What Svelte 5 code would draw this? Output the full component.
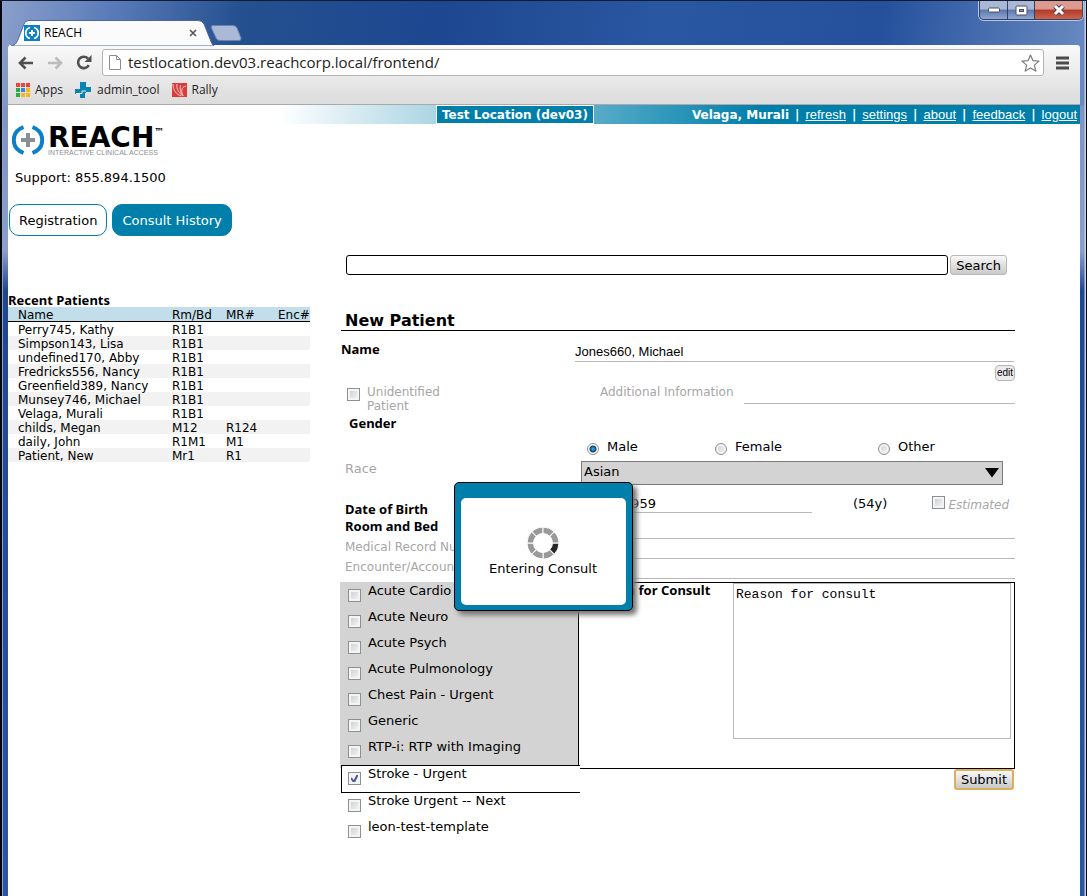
<script>
  const links = ['refresh', 'settings', 'about', 'feedback', 'logout'];
  const patients = [
    ['Perry745, Kathy', 'R1B1', '', ''],
    ['Simpson143, Lisa', 'R1B1', '', ''],
    ['undefined170, Abby', 'R1B1', '', ''],
    ['Fredricks556, Nancy', 'R1B1', '', ''],
    ['Greenfield389, Nancy', 'R1B1', '', ''],
    ['Munsey746, Michael', 'R1B1', '', ''],
    ['Velaga, Murali', 'R1B1', '', ''],
    ['childs, Megan', 'M12', 'R124', ''],
    ['daily, John', 'R1M1', 'M1', ''],
    ['Patient, New', 'Mr1', 'R1', '']
  ];
  let templates = $state([
    { name: 'Acute Cardio', on: false },
    { name: 'Acute Neuro', on: false },
    { name: 'Acute Psych', on: false },
    { name: 'Acute Pulmonology', on: false },
    { name: 'Chest Pain - Urgent', on: false },
    { name: 'Generic', on: false },
    { name: 'RTP-i: RTP with Imaging', on: false },
    { name: 'Stroke - Urgent', on: true },
    { name: 'Stroke Urgent -- Next', on: false },
    { name: 'leon-test-template', on: false }
  ]);
  let gender = $state('Male');
  let name = $state('Jones660, Michael');
  let birth = $state('01/01/1959');
  let reason = $state('Reason for consult');
  const appColors = ['#e8453c', '#e8453c', '#e8453c', '#2da94f', '#3b82e8', '#f4b61a', '#2da94f', '#f4b61a', '#f4b61a'];
</script>

<div class="window">
  <div class="controls">
    <button class="ctl min" aria-label="Minimize">
      <svg width="14" height="6"><rect x="1.5" y="1" width="11" height="4" rx="1" fill="#fff" stroke="#4a4f63" /></svg>
    </button>
    <button class="ctl max" aria-label="Maximize">
      <svg width="13" height="11"><rect x="1" y="1" width="11" height="9" rx="1" fill="#fff" stroke="#4a4f63" /><rect x="4.5" y="4.5" width="4" height="2" fill="#7b93c4" stroke="#4a4f63" /></svg>
    </button>
    <button class="ctl close" aria-label="Close">
      <svg width="14" height="12" viewBox="0 0 14 12"><path d="M3 2l8 8M11 2l-8 8" stroke="#54424c" stroke-width="5" /><path d="M3 2l8 8M11 2l-8 8" stroke="#fff" stroke-width="3" /></svg>
    </button>
  </div>

  <div class="tabstrip">
    <div class="tab">
      <svg class="tabshape" viewBox="0 0 203 26" preserveAspectRatio="none"><path d="M0 26C5 25 6 22 8 17L13 4Q14 .5 18 .5H187Q191 .5 193 4L199 19Q201 25 203 26Z" fill="#fbfbfb" stroke="#4d669c" stroke-width="1" /></svg>
      <svg class="favicon" width="16" height="16" viewBox="0 0 16 16"><rect width="16" height="16" fill="#0b80c5" /><path d="M6 2.500A5.700 5.700 0 0 0 6 13.500M10 2.500A5.700 5.700 0 0 1 10 13.500" fill="none" stroke="#fff" stroke-width="1.800" /><path d="M8 5v6M5 8h6" stroke="#fff" stroke-width="2" /></svg>
      <span class="tabtitle">REACH</span>
      <button class="tabclose" aria-label="Close tab"><svg width="8" height="8" viewBox="0 0 8 8"><path d="M1 1l6 6M7 1L1 7" stroke="#555" stroke-width="1.600" /></svg></button>
    </div>
    <button class="newtab" aria-label="New tab"><svg width="32" height="16" viewBox="0 0 32 16"><path d="M3 .5H23Q26 .5 27 3L31 13Q31.500 15.500 29 15.500H10Q7 15.500 6 13L1.500 3Q.500 .5 3 .5Z" fill="#a9b9d6" stroke="#6c82ae" /></svg></button>
  </div>

  <div class="toolbar">
    <div class="addressrow">
      <button class="nav" aria-label="Back"><svg width="16" height="14" viewBox="0 0 16 14"><path d="M7.500 1.500L2 7l5.500 5.500M2 7h13" fill="none" stroke="#505050" stroke-width="2.600" /></svg></button>
      <button class="nav" aria-label="Forward"><svg width="16" height="14" viewBox="0 0 16 14"><path d="M8.500 1.500L14 7l-5.500 5.500M14 7H1" fill="none" stroke="#bcbcbc" stroke-width="2.600" /></svg></button>
      <button class="nav" aria-label="Reload"><svg width="16" height="15" viewBox="0 0 16 15"><path d="M12.800 10.200A5.700 5.700 0 1 1 12 3.600" fill="none" stroke="#505050" stroke-width="2.600" /><path d="M15.500 0v7H8.500Z" fill="#505050" /></svg></button>
      <div class="omnibox">
        <svg width="12" height="15" viewBox="0 0 12 15"><path d="M.500 .5H7.500L11.500 4.500V14.500H.500ZM7.500 .5V4.500H11.500" fill="#fff" stroke="#8c8c8c" /></svg>
        <input class="url" aria-label="Address" value="testlocation.dev03.reachcorp.local/frontend/" />
        <button class="star" aria-label="Bookmark this page"><svg width="19" height="18" viewBox="0 0 19 18"><path d="M9.500 1l2.400 5.600 6.100.5-4.600 4 1.400 6-5.300-3.200-5.300 3.200 1.400-6-4.600-4 6.100-.5Z" fill="#fff" stroke="#7c7c7c" stroke-width="1.200" stroke-linejoin="round" /></svg></button>
      </div>
      <button class="menu" aria-label="Menu"><svg width="13" height="14"><path d="M0 2h13M0 7h13M0 12h13" stroke="#4b4b4b" stroke-width="3" /></svg></button>
    </div>
    <div class="bookmarks">
      <a href="#apps"><svg width="14" height="14">{#each appColors as c, i}<rect x={(i % 3) * 5} y={Math.floor(i / 3) * 5} width="4" height="4" fill={c} />{/each}</svg>Apps</a>
      <a href="#admin"><svg width="17" height="16" viewBox="0 0 17 16"><path d="M5 0h6v5h5v5h-5v1h-1v5H5v-4H0V7h5Z" fill="#0a83b0" /><path d="M1 11.500h6V9h4" fill="none" stroke="#e8eef2" /></svg>admin_tool</a>
      <a href="#rally"><svg width="15" height="14" viewBox="0 0 15 14"><rect width="15" height="14" fill="#dd3b3a" /><path d="M1 1c0 6 3 10 8 12M5 1c-1 5 2 9 6 12M8.500 2c-1 4 0 7 2.500 11M14 3c-5 1-5 6-3 10" fill="none" stroke="#f6cfc8" stroke-width="1" /></svg>Rally</a>
    </div>
  </div>

  <div class="page">
    <header class="topbar">
      <strong class="location">Test Location (dev03)</strong>
      <nav class="user">
        <strong>Velaga, Murali</strong>
        {#each links as l}<b class="bar">|</b><a href="#{l}">{l}</a>{/each}
      </nav>
    </header>

    <div class="brand">
      <svg width="32" height="32" viewBox="0 0 32 32"><path d="M11.500 3C-1.500 8-1.500 24 11.500 29M20.500 3C33.500 8 33.500 24 20.500 29" fill="none" stroke="#0b7fc8" stroke-width="4" /><path d="M16 9v14M9 16h14" stroke="#8b8f94" stroke-width="4" /></svg>
      <div class="words">
        <div class="reach">REACH<sup>™</sup></div>
        <div class="tagline">INTERACTIVE CLINICAL ACCESS</div>
      </div>
    </div>
    <div class="support">Support: 855.894.1500</div>
    <div class="tabs">
      <button>Registration</button>
      <button class="active">Consult History</button>
    </div>

    <div class="columns">
      <aside>
        <h2>Recent Patients</h2>
        <table>
          <thead><tr><th>Name</th><th>Rm/Bd</th><th>MR#</th><th>Enc#</th></tr></thead>
          <tbody>
            {#each patients as row}
              <tr>{#each row as cell}<td>{cell}</td>{/each}</tr>
            {/each}
          </tbody>
        </table>
      </aside>

      <main>
        <div class="search">
          <input type="text" aria-label="Search" />
          <button class="push">Search</button>
        </div>

        <h1>New Patient</h1>

        <div class="namerow">
          <label class="strong" for="name">Name</label>
          <input id="name" class="line" bind:value={name} />
        </div>
        <div class="editrow"><button class="edit">edit</button></div>

        <div class="unid">
          <label class="unidlabel"><input type="checkbox" /><span>Unidentified Patient</span></label>
          <label class="addl" for="addl">Additional Information</label>
          <input id="addl" class="line" />
        </div>

        <div class="strong gender">Gender</div>
        <div class="genders">
          {#each ['Male', 'Female', 'Other'] as g}
            <label><input type="radio" name="gender" value={g} bind:group={gender} />{g}</label>
          {/each}
        </div>

        <div class="racerow">
          <label class="muted" for="race">Race</label>
          <div class="select">
            <select id="race"><option>Asian</option></select>
            <svg width="14" height="10" viewBox="0 0 14 10"><path d="M0 0h14L7 9.500Z" /></svg>
          </div>
        </div>

        <div class="dob">
          <label class="strong" for="dob">Date of Birth</label>
          <input id="dob" class="line" bind:value={birth} />
          <span class="age">(54y)</span>
          <label class="est"><input type="checkbox" /><em>Estimated</em></label>
        </div>
        <div class="field room"><label class="strong" for="room">Room and Bed</label><input id="room" class="line" /></div>
        <div class="field"><label class="muted" for="mrn">Medical Record Number</label><input id="mrn" class="line" /></div>
        <div class="field"><label class="muted" for="enc">Encounter/Account #</label><input id="enc" class="line" /></div>

        <div class="consult">
          <div class="templates">
            {#each templates as t}
              <label class:chosen={t.on}><input type="checkbox" bind:checked={t.on} /><span>{t.name}</span></label>
            {/each}
          </div>
          <div class="right">
            <div class="reason">
              <label class="strong" for="reason">Reason for Consult</label>
              <textarea id="reason" bind:value={reason}></textarea>
            </div>
            <button class="push submit">Submit</button>
          </div>
        </div>
      </main>
    </div>
  </div>

  <div class="modal" role="status">
    <div class="modalbody">
      <svg width="32" height="32" viewBox="-16 -16 32 32">
        {#each [0, 1, 2, 3, 4, 5, 6, 7] as i}
          <path d="M16 0A16 16 0 0 1 11.300 11.300L6.700 6.700A9.500 9.500 0 0 0 9.500 0Z" fill={i === 0 ? '#262626' : '#999'} stroke="#fff" transform="rotate({i * 45})" />
        {/each}
      </svg>
      <div>Entering Consult</div>
    </div>
  </div>
</div>

<style>
  :global(body) { margin: 0; }
  .window, .window :global(*) { box-sizing: border-box; }
  .window {
    position: relative;
    min-height: 100vh;
    display: flex;
    flex-direction: column;
    padding: 0 7px 0 8px;
    overflow: hidden;
    font: 13px/14px "DejaVu Sans", Verdana, sans-serif;
    color: #000;
    background:
      linear-gradient(90deg, #05070f 0 2px, #8ea3cb 2px 3px, transparent 3px calc(100% - 3px), #c3cfe4 calc(100% - 2px) calc(100% - 1px), #05070f calc(100% - 1px)),
      linear-gradient(100deg, #8ba0cb 0, #5b7cba 10%, #24508f 22%, #1d4790 40%, #2a57a2 60%, #24509c 80%, #6c8cc2 100%) 0 0 / 100% 105px no-repeat,
      linear-gradient(#7d95c4 105px, #8a9fcb 250px, #1e4792 290px, #2a579f 100%);
    border-top: 1px solid #141b33;
  }
  button, input, select, textarea { font: inherit; color: inherit; margin: 0; }
  button { padding: 0; border: 0; background: none; }

  .controls { position: absolute; top: 0; right: 4px; display: flex; height: 19px; border: 1px solid #35425f; border-top: 0; border-radius: 0 0 5px 5px; overflow: hidden; box-shadow: 0 0 0 1px #b9c6e0; }
  .ctl { display: flex; align-items: center; justify-content: center; background: linear-gradient(#a9b8d6 0 45%, #5c77ad 50%, #8fa6d2); border-right: 1px solid #35425f; }
  .min { width: 28px; }
  .max { width: 27px; }
  .close { width: 47px; border-right: 0; background: linear-gradient(#dc9a90 0 45%, #b03a28 50%, #cc6450); }

  .tabstrip { display: flex; padding: 19px 0 0 3px; height: 44px; }
  .tab { position: relative; display: flex; align-items: center; width: 203px; height: 26px; padding: 0 17px 0 13px; font: 12px/16px "Open Sans", sans-serif; }
  .tabshape { position: absolute; left: 0; top: 0; width: 100%; height: 100%; }
  .favicon, .tabtitle, .tabclose { position: relative; }
  .tabtitle { flex: 1; padding-left: 4px; }
  .tabclose { display: flex; }
  .newtab { display: flex; padding-top: 5px; margin-left: -4px; align-self: flex-start; }

  .toolbar { background: linear-gradient(#fafafa, #dedede 54px); border-bottom: 1px solid #a9a9a9; border-radius: 3px 3px 0 0; height: 60px; padding: 4px 6px 0 10px; font-family: "Open Sans", sans-serif; }
  .addressrow { display: flex; align-items: center; }
  .nav { width: 29px; display: flex; flex: none; }
  .omnibox { flex: 1; display: flex; align-items: center; height: 27px; margin-left: -3px; padding: 0 3px 0 6px; border: 1px solid #b3b3b3; border-radius: 3px; background: #fff; }
  .url { flex: 1; min-width: 0; border: 0; padding: 0 7px 2px; font-size: 15px; line-height: 20px; outline: 0; background: none; color: #222; }
  .star { display: flex; }
  .menu { display: flex; padding: 0 5px 0 12px; }
  .bookmarks { display: flex; gap: 12px; padding: 5px 0 0; margin-left: -2px; font-size: 12px; line-height: 18px; }
  .bookmarks a { display: flex; align-items: center; gap: 5px; color: #222; text-decoration: none; }

  .page { flex: 1; background: #fff; }
  .topbar { display: flex; align-items: flex-start; height: 19px; margin-left: 271px; padding-right: 3px; line-height: 20px; color: #fff; background: linear-gradient(90deg, #fff, #007fab 60%); font-size: 12px; }
  .location { margin-left: 157px; padding: 1px 5px 0; line-height: 16px; border: 1px solid #fff; background: #007fab; }
  .user { display: flex; margin-left: auto; gap: 6px; }
  .user a { color: #fff; font: 13px/20px "Liberation Sans", sans-serif; }
  .brand { display: flex; align-items: flex-start; padding: 0 0 0 4px; height: 36px; }
  .words { padding: 2px 0 0 4px; }
  .reach { font-weight: 700; font-size: 28px; line-height: 23px; height: 23px; }
  .reach sup { font-size: 10px; line-height: 8px; vertical-align: 12px; }
  .tagline { font: 7px/8px "Liberation Sans", sans-serif; color: #8b8f94; white-space: nowrap; }
  .support { padding: 11px 0 0 7px; }
  .tabs { display: flex; gap: 5px; padding: 19px 0 0 1px; }
  .tabs button { height: 32px; padding: 1px 9px 0; border: 1px solid #007fab; border-radius: 10px; }
  .tabs .active { background: #007fab; color: #fff; }

  .columns { display: grid; grid-template-columns: 302px minmax(0, 1fr); }
  aside { padding-top: 57px; }
  h2 { margin: 0; font: 700 13px/14px "Noto Sans", sans-serif; }
  table { width: 100%; border-collapse: collapse; table-layout: fixed; font-size: 12px; }
  th, td { padding: 2px 0 0; height: 14px; line-height: 12px; font-weight: 400; text-align: left; white-space: nowrap; }
  th { background: #c1deea; border-bottom: 1px solid #000; }
  th:first-child, td:first-child { padding-left: 10px; width: 164px; }
  th:nth-child(2) { width: 54px; }
  th:nth-child(3) { width: 52px; }
  tbody tr:nth-child(even) { background: #f2f2f2; }

  main { padding: 19px 65px 60px 31px; }
  .strong { font: 700 13px/14px "Noto Sans", sans-serif; }
  .muted, .addl, .unidlabel, em { color: #a6a6a6; }
  .line { border: 0; border-bottom: 1px solid #b8b8b8; padding: 0; background: none; outline: 0; min-width: 0; height: 20px; border-radius: 0; }
  .push { border: 1px solid #b9b9b9; border-radius: 3px; background: linear-gradient(#f8f8f8, #c9c9c9); height: 20px; padding: 1px 5px 0; }
  .search { display: flex; gap: 2px; padding: 0 8px 0 5px; }
  .search input { flex: 1; min-width: 0; height: 20px; border: 1px solid #000; border-radius: 3px; }
  h1 { margin: 36px 0 0; padding: 1px 0 0 4px; border-bottom: 1px solid #000; font-size: 16px; line-height: 18px; }
  .namerow { display: grid; grid-template-columns: 234px 1fr; padding: 11px 1px 0 0; }
  .namerow .line { font: 13px/16px "Liberation Sans", sans-serif; }
  .editrow { display: flex; justify-content: flex-end; padding: 3px 0 0; }
  .edit { height: 16px; width: 20px; border: 1px solid #b5b5b5; border-radius: 4px; background: #ececec; font: 10px/12px "Liberation Sans", sans-serif; }
  .unid { display: grid; grid-template-columns: 259px auto 1fr; align-items: start; padding: 3px 0 0; }
  .unidlabel { display: flex; gap: 7px; width: 115px; padding-left: 6px; line-height: 14px; font-size: 12px; }
  .unidlabel span, .addl { padding-top: 1px; }
  .unid .line { margin-left: 10px; }
  .addl { font-size: 12px; }
  .unid .unidlabel { height: 29px; }
  input[type="checkbox"], input[type="radio"] { appearance: none; flex: none; width: 13px; height: 13px; border: 1px solid #8e8f8f; background: linear-gradient(135deg, #c6cbd2, #f8f8f8); box-shadow: inset 0 0 0 2px #f4f4f4; margin-top: 4px; }
  input[type="radio"] { width: 12px; height: 12px; border-radius: 50%; margin-top: 3px; }
  input[type="radio"]:checked { background: radial-gradient(circle, #2aa0d8 0 1px, #12395e 3px, #fff 4px); box-shadow: none; }
  input[type="checkbox"]:checked { background: #f4f4f4 url("data:image/svg+xml,%3Csvg xmlns='http://www.w3.org/2000/svg' viewBox='0 0 11 11'%3E%3Cpath d='M2 5l3 4 4-8' fill='none' stroke='%23465a9c' stroke-width='2'/%3E%3C/svg%3E"); }
  .gender { padding: 3px 0 0 8px; }
  .genders { display: grid; grid-template-columns: 128px 163px auto; justify-content: start; padding: 10px 0 0 246px; }
  .genders label { display: flex; gap: 8px; }
  .racerow { display: grid; grid-template-columns: 236px 1fr; padding: 6px 12px 0 4px; }
  .racerow .muted { padding-top: 1px; }
  .select { position: relative; }
  .select select { appearance: none; display: block; width: 100%; height: 24px; padding: 0 2px 3px; border: 1px solid #7b7b7b; border-radius: 0; background: #d3d3d3; }
  .select svg { position: absolute; right: 4px; top: 7px; pointer-events: none; }
  .dob { display: flex; align-items: flex-start; padding: 8px 6px 0 4px; }
  .dob .strong { width: 236px; padding-top: 9px; }
  .dob .line { width: 231px; padding-top: 1px; }
  .age { padding: 4px 0 0 41px; flex: 1; }
  .est { display: flex; gap: 3px; padding-top: 1px; }
  .est em { font-size: 12px; padding-top: 4px; }
  .est input { margin-top: 2px; }
  .field { display: grid; grid-template-columns: 236px 1fr; align-items: end; height: 20px; padding-left: 4px; }
  .field label { padding-bottom: 5px; white-space: nowrap; overflow: visible; font-size: 12px; }
  .room { height: 23px; }
  .field .strong { padding-bottom: 6px; font-size: 13px; }
  .consult { display: grid; grid-template-columns: 238px 1fr; padding-top: 3px; }
  .templates { position: relative; background: linear-gradient(#d3d3d3 186px, #fff 186px); margin-left: -1px; padding-top: 1px; }
  .templates label { display: flex; gap: 7px; height: 26px; padding: 1px 0 0 8px; border-right: 1px solid #000; }
  .templates input { margin-top: 5px; }
  .templates label.chosen { height: 28px; margin: 0 -1px 0 1px; background: #fff; border: 1px solid #000; border-right: 0; padding: 1px 0 0 6px; }
  .templates .chosen ~ label { border-right-color: transparent; }
  .right { display: flex; flex-direction: column; align-items: flex-end; }
  .reason { display: flex; justify-content: space-between; align-self: stretch; height: 187px; border: 1px solid #000; border-left: 0; padding: 0 3px 0 9px; }
  .reason textarea { width: 278px; height: 156px; border: 1px solid #b8b8b8; padding: 3px 2px; resize: none; font: 13px/16px "Liberation Mono", monospace; }
  .submit { margin-right: 1px; border: 2px solid #dfae58; height: 21px; }

  .modal { position: absolute; top: 481px; left: 50%; width: 179px; margin-left: -90px; padding: 15px 6px 5px; border: 1px solid #000; border-radius: 5px; background: #007fab; box-shadow: 4px 4px 5px #777; }
  .modalbody { display: flex; flex-direction: column; align-items: center; gap: 3px; height: 107px; padding-top: 29px; border-radius: 5px; background: #fff; }
</style>
